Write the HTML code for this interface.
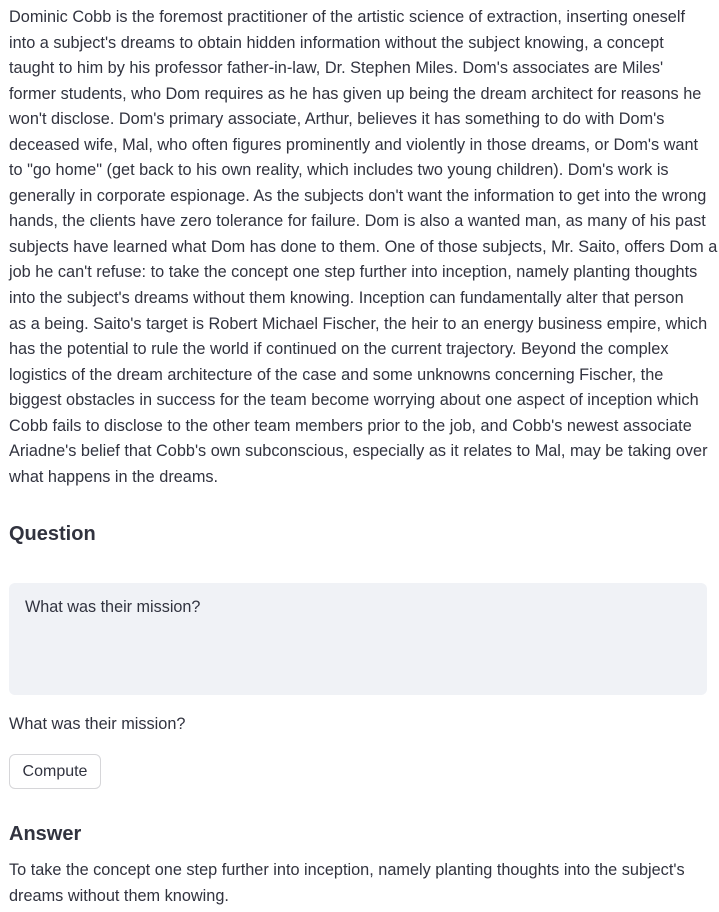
<!DOCTYPE html>
<html><head><meta charset="utf-8"><style>
body{margin:0;background:#fff;color:#31333f;font-family:"Liberation Sans",sans-serif;width:719px;height:912px;overflow:hidden;position:relative}
.p{position:absolute;left:9px;top:5px;font-size:16.3px;line-height:25.55px;white-space:nowrap}
h3{position:absolute;left:9px;margin:0;font-size:20px;font-weight:600}
.ta{position:absolute;left:9px;top:583px;width:698px;height:112px;background:#f0f2f6;border-radius:6px}
.ta span{position:absolute;left:16px;top:15px;font-size:16.2px}
.btn{position:absolute;left:9px;top:754px;border:1px solid #d6d6d9;border-radius:6px;box-sizing:border-box;font-size:16px;text-align:center;line-height:33px;width:92px;height:35px}
.t{position:absolute;left:9px;font-size:16.3px;white-space:nowrap}
</style></head><body>
<div class="p">Dominic Cobb is the foremost practitioner of the artistic science of extraction, inserting oneself<br>into a subject's dreams to obtain hidden information without the subject knowing, a concept<br>taught to him by his professor father-in-law, Dr. Stephen Miles. Dom's associates are Miles'<br>former students, who Dom requires as he has given up being the dream architect for reasons he<br>won't disclose. Dom's primary associate, Arthur, believes it has something to do with Dom's<br>deceased wife, Mal, who often figures prominently and violently in those dreams, or Dom's want<br>to "go home" (get back to his own reality, which includes two young children). Dom's work is<br>generally in corporate espionage. As the subjects don't want the information to get into the wrong<br>hands, the clients have zero tolerance for failure. Dom is also a wanted man, as many of his past<br>subjects have learned what Dom has done to them. One of those subjects, Mr. Saito, offers Dom a<br>job he can't refuse: to take the concept one step further into inception, namely planting thoughts<br>into the subject's dreams without them knowing. Inception can fundamentally alter that person<br>as a being. Saito's target is Robert Michael Fischer, the heir to an energy business empire, which<br>has the potential to rule the world if continued on the current trajectory. Beyond the complex<br>logistics of the dream architecture of the case and some unknowns concerning Fischer, the<br>biggest obstacles in success for the team become worrying about one aspect of inception which<br>Cobb fails to disclose to the other team members prior to the job, and Cobb's newest associate<br>Ariadne's belief that Cobb's own subconscious, especially as it relates to Mal, may be taking over<br>what happens in the dreams.</div>
<h3 style="top:523px">Question</h3>
<div class="ta"><span>What was their mission?</span></div>
<div class="t" style="top:715px">What was their mission?</div>
<div class="btn">Compute</div>
<h3 style="top:823px">Answer</h3>
<div class="t" style="top:858px;line-height:25.5px">To take the concept one step further into inception, namely planting thoughts into the subject's<br>dreams without them knowing.</div>
</body></html>
